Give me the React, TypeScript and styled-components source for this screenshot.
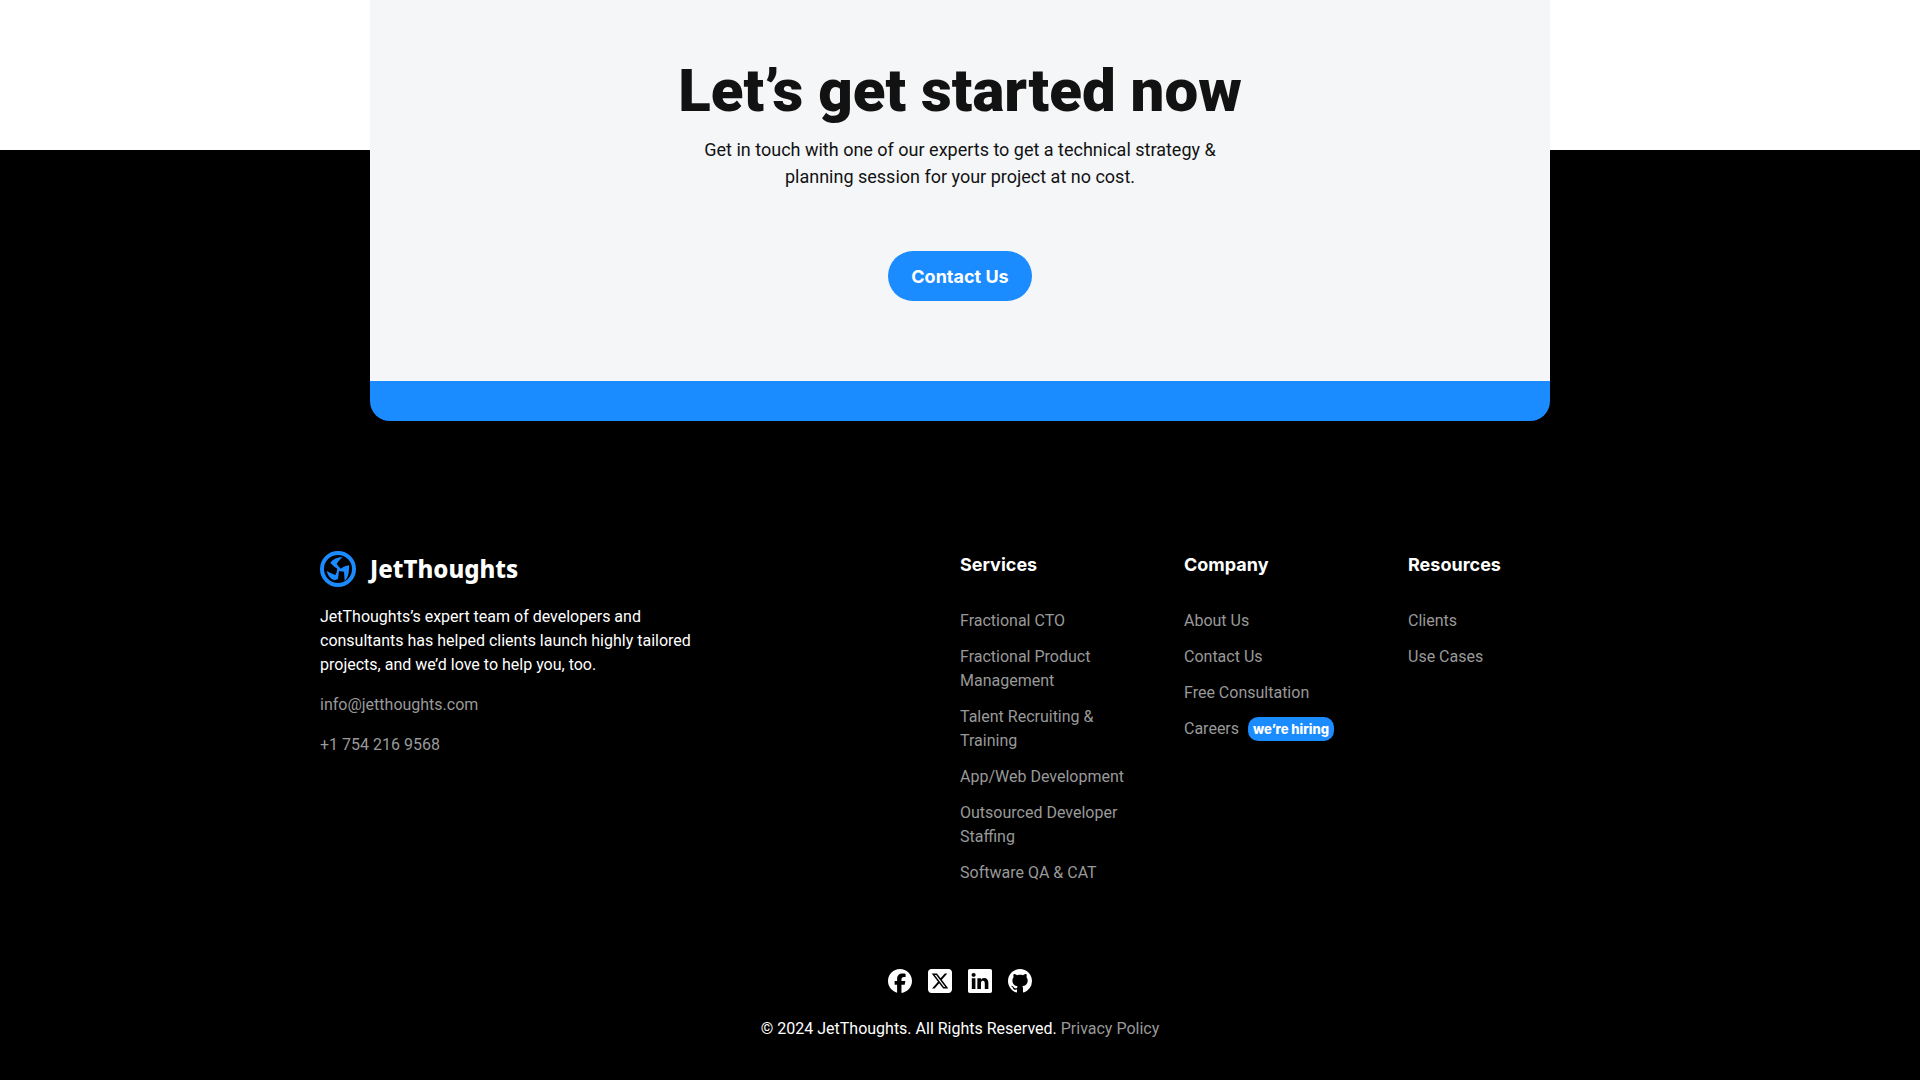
import React from "react";
import styled, { createGlobalStyle } from "styled-components";
import { BsGithub, BsLinkedin } from "react-icons/bs";
import { FaFacebook } from "react-icons/fa6";

const blue = "#1a8cff";
const bodyFont = `Roboto, "Liberation Sans", sans-serif`;
const boldFont = `Inter, "Liberation Sans", sans-serif`;

const GlobalStyle = createGlobalStyle`
  * { box-sizing: border-box; }
  body {
    margin: 0;
    background: #000;
    color: #fff;
    font-family: ${bodyFont};
    font-size: 16px;
    line-height: 24px;
  }
`;

const CallToAction = styled.section`
  display: flex;
  justify-content: center;
  background: linear-gradient(#fff 150px, #000 150px);
`;

const Card = styled.div`
  display: flex;
  flex-direction: column;
  align-items: center;
  width: 100%;
  max-width: 1180px;
  padding: 55px 24px 80px;
  background: #f4f6f8;
  border-bottom: 40px solid ${blue};
  border-radius: 0 0 20px 20px;
  color: #121212;
  text-align: center;
`;

const Title = styled.h2`
  margin: 0 0 9px;
  font-size: 60px;
  font-weight: 900;
  line-height: 72px;
`;

const Lead = styled.p`
  max-width: 560px;
  margin: 0 0 61px;
  font-size: 18px;
  line-height: 27px;
`;

const ContactButton = styled.button`
  height: 50px;
  padding: 0 23px;
  border: 0;
  border-radius: 25px;
  background: ${blue};
  color: #fff;
  font-family: ${boldFont};
  font-size: 18px;
  font-weight: 700;
  cursor: pointer;
`;

const Footer = styled.footer`
  max-width: 1328px;
  margin: 0 auto;
  padding: 130px 24px 38px;
`;

const FooterTop = styled.div`
  display: grid;
  grid-template-columns: 1fr 1fr;
  margin-bottom: 84px;
`;

const Brand = styled.div`
  max-width: 384px;
`;

const LogoLink = styled.a`
  display: flex;
  align-items: center;
  gap: 14px;
  height: 36px;
  margin-bottom: 18px;
  color: #fff;
  font-family: "Noto Sans", sans-serif;
  font-size: 24px;
  font-weight: 800;
  text-decoration: none;
`;

const BrandText = styled.p`
  margin: 0 0 16px;
`;

const FooterLink = styled.a`
  color: #999;
  text-decoration: none;
`;

const Nav = styled.nav`
  display: grid;
  grid-template-columns: repeat(3, 1fr);
  column-gap: 32px;
`;

const NavTitle = styled.h3`
  margin: 0 0 31px;
  font-family: ${boldFont};
  font-size: 18px;
  font-weight: 700;
  line-height: 27px;
`;

const NavList = styled.ul`
  display: flex;
  flex-direction: column;
  gap: 12px;
  margin: 0;
  padding: 0;
  list-style: none;
`;

const NavItem = styled.li`
  display: flex;
  gap: 9px;
`;

const Badge = styled.span`
  padding: 0 5px;
  border-radius: 10px;
  background: ${blue};
  color: #fff;
  font-family: ${boldFont};
  font-size: 13px;
  font-weight: 800;
`;

const Social = styled.div`
  display: flex;
  justify-content: center;
  gap: 16px;
  margin-bottom: 24px;
`;

const SocialLink = styled.a`
  display: flex;
  color: #fff;
`;

const Copyright = styled.p`
  margin: 0;
  text-align: center;
`;

type Item = { label: string; badge?: string };

const columns: { title: string; items: Item[] }[] = [
  {
    title: "Services",
    items: [
      { label: "Fractional CTO" },
      { label: "Fractional Product Management" },
      { label: "Talent Recruiting & Training" },
      { label: "App/Web Development" },
      { label: "Outsourced Developer Staffing" },
      { label: "Software QA & CAT" },
    ],
  },
  {
    title: "Company",
    items: [
      { label: "About Us" },
      { label: "Contact Us" },
      { label: "Free Consultation" },
      { label: "Careers", badge: "we’re hiring" },
    ],
  },
  { title: "Resources", items: [{ label: "Clients" }, { label: "Use Cases" }] },
];

function LogoMark() {
  return (
    <svg width="36" height="36" viewBox="0 0 108 108" fill={blue} aria-hidden="true">
      <circle cx="54" cy="54" r="48" fill="none" stroke={blue} strokeWidth="12" />
      <path d="M68 19 C52 18 38 25 31 36 L43 47 L52 53 L50 64 L46 72 C38 70 30 65 20 60 C23 74 31 84 44 88 L54 84 L57 60 L72 62 L74 90 C83 82 88 69 87 43 C77 44 69 49 62 53 L50 39 C54 32 60 25 68 19 Z" />
    </svg>
  );
}

function SquareX() {
  return (
    <svg width="24" height="24" viewBox="0 32 448 448" fill="currentColor" aria-hidden="true">
      <path d="M64 32C28.7 32 0 60.7 0 96V416c0 35.3 28.7 64 64 64H384c35.3 0 64-28.7 64-64V96c0-35.3-28.7-64-64-64H64zm297.1 84L257.3 234.6 379.4 396H283.8L209 298.1 123.3 396H75.8l111-126.9L69.7 116h98l67.7 89.5L313.6 116h47.5zM323.3 367.6L153.4 142.9H125.1L296.9 367.6h26.3z" />
    </svg>
  );
}

export default function App() {
  return (
    <>
      <GlobalStyle />
      <CallToAction>
        <Card>
          <Title>Let’s get started now</Title>
          <Lead>
            Get in touch with one of our experts to get a technical strategy &amp; planning session
            for your project at no cost.
          </Lead>
          <ContactButton type="button">Contact Us</ContactButton>
        </Card>
      </CallToAction>
      <Footer>
        <FooterTop>
          <Brand>
            <LogoLink href="#">
              <LogoMark />
              JetThoughts
            </LogoLink>
            <BrandText>
              JetThoughts’s expert team of developers and consultants has helped clients launch
              highly tailored projects, and we’d love to help you, too.
            </BrandText>
            <BrandText>
              <FooterLink href="mailto:info@jetthoughts.com">info@jetthoughts.com</FooterLink>
            </BrandText>
            <BrandText>
              <FooterLink href="tel:+17542169568">+1 754 216 9568</FooterLink>
            </BrandText>
          </Brand>
          <Nav>
            {columns.map((column) => (
              <div key={column.title}>
                <NavTitle>{column.title}</NavTitle>
                <NavList>
                  {column.items.map((item) => (
                    <NavItem key={item.label}>
                      <FooterLink href="#">{item.label}</FooterLink>
                      {item.badge && <Badge>{item.badge}</Badge>}
                    </NavItem>
                  ))}
                </NavList>
              </div>
            ))}
          </Nav>
        </FooterTop>
        <Social>
          <SocialLink href="#" aria-label="Facebook"><FaFacebook size={24} /></SocialLink>
          <SocialLink href="#" aria-label="X"><SquareX /></SocialLink>
          <SocialLink href="#" aria-label="LinkedIn"><BsLinkedin size={24} /></SocialLink>
          <SocialLink href="#" aria-label="GitHub"><BsGithub size={24} /></SocialLink>
        </Social>
        <Copyright>
          © 2024 JetThoughts. All Rights Reserved. <FooterLink href="#">Privacy Policy</FooterLink>
        </Copyright>
      </Footer>
    </>
  );
}
